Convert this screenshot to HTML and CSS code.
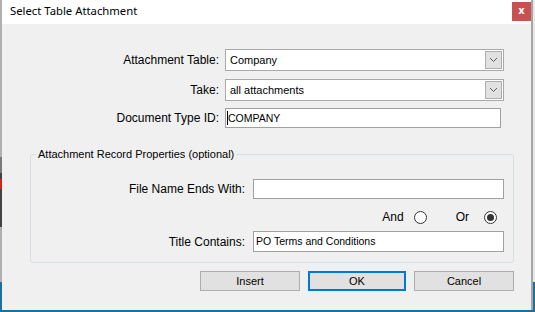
FILE: index.html
```html
<!DOCTYPE html>
<html lang="en">
<head>
  <meta charset="UTF-8">
  <title>Select Table Attachment</title>
  <link rel="stylesheet" href="styles.css">
</head>
<body>

<div class="desktop">
  <div class="edge"></div>

  <div class="dialog">
    <div class="titlebar">
      <span class="title">Select Table Attachment</span>
      <span class="close">x</span>
    </div>

    <div class="content">
      <div class="row">
        <label class="lbl">Attachment Table:</label>
        <div class="combo">
          <span class="combo-text">Company</span>
          <span class="combo-btn">
            <svg width="9" height="6" viewBox="0 0 9 6"><polyline points="1,1 4.5,4.5 8,1" fill="none" stroke="#606060" stroke-width="1"/></svg>
          </span>
        </div>
      </div>

      <div class="row row-combo2">
        <label class="lbl">Take:</label>
        <div class="combo">
          <span class="combo-text">all attachments</span>
          <span class="combo-btn">
            <svg width="9" height="6" viewBox="0 0 9 6"><polyline points="1,1 4.5,4.5 8,1" fill="none" stroke="#606060" stroke-width="1"/></svg>
          </span>
        </div>
      </div>

      <div class="row row-doc">
        <label class="lbl">Document Type ID:</label>
        <div class="textbox doc-box"><span class="caret"></span>COMPANY</div>
      </div>

      <fieldset class="group">
        <legend>Attachment Record Properties (optional)</legend>

        <div class="grow grow-file">
          <label class="glbl">File Name Ends With:</label>
          <div class="textbox gbox"></div>
        </div>

        <div class="radios">
          <span class="rtext">And</span>
          <span class="radio"></span>
          <span class="rtext rtext-or">Or</span>
          <span class="radio checked"></span>
        </div>

        <div class="grow grow-title">
          <label class="glbl">Title Contains:</label>
          <div class="textbox gbox gbox-title">PO Terms and Conditions</div>
        </div>
      </fieldset>

      <div class="buttons">
        <button class="btn">Insert</button>
        <button class="btn btn-default">OK</button>
        <button class="btn">Cancel</button>
      </div>
    </div>
  </div>
</div>

</body>
</html>
```

FILE: styles.css
```css
html, body {
  margin: 0;
  padding: 0;
}

body {
  width: 535px;
  height: 312px;
  overflow: hidden;
  background: linear-gradient(to bottom, #e9e9e9 0, #e9e9e9 282px, #1d6f9c 282px);
  font-family: "Liberation Sans", Arial, sans-serif;
  font-size: 12px;
  color: #000;
}

.desktop {
  display: flex;
  align-items: flex-start;
  height: 312px;
}

/* window behind the dialog, showing at the left edge */
.edge {
  width: 2px;
  height: 282px;
  background: linear-gradient(to bottom,
    #b0b0b0 0, #b0b0b0 157px,
    #7a7a7a 157px, #7a7a7a 173px,
    #444 173px, #444 179px,
    #d4241b 179px, #d4241b 189px,
    #444 189px, #444 227px,
    #b0b0b0 227px);
}

.dialog {
  width: 529px;
  height: 310px;
  background-color: #f0f0f0;
  border-right: 2px solid #a6a6a6;
}

.titlebar {
  height: 24px;
  background-color: #fff;
  display: flex;
  align-items: flex-start;
  justify-content: space-between;
}

.title {
  font-family: "Noto Sans", "Open Sans", sans-serif;
  font-size: 11.3px;
  margin-left: 8px;
  margin-top: 3px;
  color: #000;
}

.close {
  width: 19px;
  height: 19px;
  margin-top: 2px;
  background-color: #c75050;
  color: #fff;
  font-family: "DejaVu Sans", sans-serif;
  font-weight: bold;
  font-size: 10px;
  line-height: 18px;
  text-align: center;
}

.content {
  padding-top: 25px;
}

.row {
  display: flex;
  align-items: center;
}

.lbl {
  width: 217px;
  text-align: right;
  margin-right: 6px;
}

.row-combo2 {
  margin-top: 8px;
}

.row-doc {
  margin-top: 7px;
}

.combo {
  width: 275px;
  height: 18px;
  border: 1px solid #a9a9a9;
  background-color: #fff;
  display: flex;
  align-items: center;
  justify-content: space-between;
  padding: 1px;
  font-size: 11px;
}

.combo-text {
  padding-left: 3px;
}

.combo-btn {
  width: 17px;
  height: 18px;
  background-color: #e1e1e1;
  border: 1px solid #adadad;
  box-sizing: border-box;
  display: flex;
  align-items: center;
  justify-content: center;
}

.textbox {
  height: 18px;
  border: 1px solid #a0a0a0;
  background-color: #fff;
  line-height: 18px;
  padding-left: 2px;
  font-size: 10.5px;
}

.doc-box {
  width: 272px;
  position: relative;
}

.caret {
  position: absolute;
  left: 1px;
  top: 2px;
  width: 1px;
  height: 14px;
  background-color: #000;
}

.group {
  margin: 20px 0 0 28px;
  width: 482px;
  padding: 0 0 10px 0;
  border: 1px solid #d5dfe5;
  border-radius: 3px;
}

.group legend {
  margin-left: 5px;
  padding: 0 2px;
  font-size: 11px;
  line-height: 13px;
  color: #000;
}

.grow {
  display: flex;
  align-items: center;
}

.glbl {
  width: 214px;
  text-align: right;
  margin-right: 8px;
}

.gbox {
  width: 247px;
}

.gbox-title {
  height: 19px;
  line-height: 19px;
}

.grow-file {
  margin-top: 18px;
}

.grow-title {
  margin-top: 1px;
}

.radios {
  display: flex;
  justify-content: flex-end;
  align-items: center;
  height: 26px;
  margin-top: 5px;
  padding-right: 16px;
}

.radio {
  width: 11px;
  height: 11px;
  border: 1px solid #333;
  border-radius: 50%;
  background-color: #fff;
  margin-left: 10px;
  position: relative;
}

.radio.checked::after {
  content: "";
  position: absolute;
  left: 2px;
  top: 2px;
  width: 7px;
  height: 7px;
  border-radius: 50%;
  background-color: #333;
}

.radio + .rtext-or {
  margin-left: 29px;
}

.rtext-or + .radio {
  margin-left: 15px;
}

.buttons {
  display: flex;
  justify-content: flex-end;
  gap: 8px;
  margin-top: 8px;
  padding-right: 17px;
}

.btn {
  width: 100px;
  height: 20px;
  font-family: "Liberation Sans", Arial, sans-serif;
  font-size: 11px;
  background-color: #e1e1e1;
  border: 1px solid #adadad;
  padding: 0;
  color: #000;
}

.btn-default {
  width: 98px;
  border: 2px solid #0078d7;
}
```
